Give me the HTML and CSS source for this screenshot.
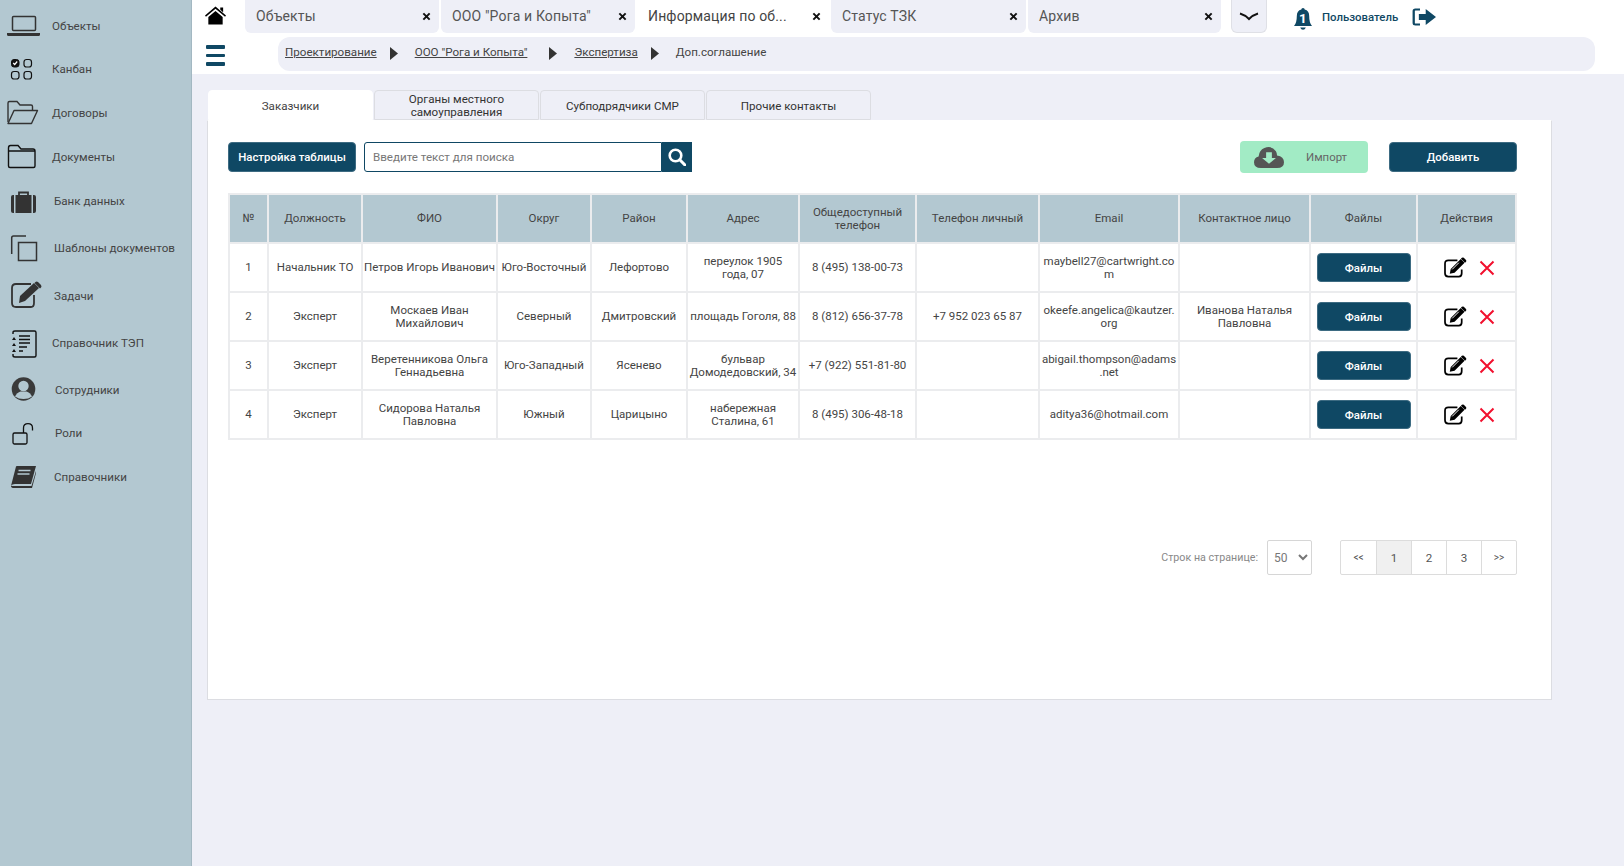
FILE: index.html
```html
<!DOCTYPE html>
<html lang="ru">
<head>
    <meta charset="UTF-8">
    <meta name="viewport" content="width=device-width, initial-scale=1.0">
    <title>Контакты</title>
    <link rel="stylesheet" href="styles.css">
</head>
<body>
    <svg class="sprite" width="0" height="0">
        <symbol id="icon-edit" viewBox="0 0 24 22">
            <path d="M14 3.5H4.5Q1 3.5 1 7v10q0 3.5 3.5 3.5h11q3 0 3-3.5v-4" fill="none" stroke="#000" stroke-width="1.8"/>
            <path d="M7 12.5 17.5 2l4 4L11 16.5l-5 1z" fill="#000"/>
            <path d="M18.7 .8q1-.8 2 0l2.300 2.300q.8 1 0 2l-1 1-4.300-4.300z" fill="#000"/>
            <path d="M8.5 13l7-7" stroke="#fff" stroke-width="1"/>
        </symbol>
        <symbol id="icon-cross" viewBox="0 0 16 16">
            <path d="M1.5 1.5l13 13M14.5 1.5l-13 13" stroke="#f2102e" stroke-width="2"/>
        </symbol>
        <symbol id="icon-crumb" viewBox="0 0 8 13">
            <path d="M0 0l8 6.5L0 13z" fill="#333"/>
        </symbol>
        <symbol id="icon-close" viewBox="0 0 10 10">
            <path d="M1.5 1.5l7 7M8.5 1.5l-7 7" stroke="#111" stroke-width="2.2"/>
        </symbol>
    </svg>

    <!-- Боковое меню -->
    <nav class="sidebar">
        <a class="side-item first">
            <svg class="side-icon" viewBox="0 0 40 30"><rect x="7.5" y="6.5" width="23" height="14" rx="1" fill="none" stroke="#333" stroke-width="1.5"/><path d="M2 23h33v1.5q0 1.500-1.500 1.500h-30q-1.500 0-1.500-1.500z" fill="#333"/></svg>
            <span class="side-label">Объекты</span>
        </a>
        <a class="side-item">
            <svg class="side-icon" viewBox="0 0 40 30"><rect x="6.5" y="6.5" width="7.5" height="7.5" rx="2.5" fill="#111" stroke="#111"/><path d="M8.2 10l1.500 1.500 2.500-3" fill="none" stroke="#fff" stroke-width="1.2"/><rect x="19" y="6.5" width="7.5" height="7.5" rx="2.5" fill="none" stroke="#111" stroke-width="1.2"/><rect x="6.5" y="18.5" width="7.5" height="7.5" rx="2.5" fill="none" stroke="#111" stroke-width="1.2"/><rect x="19" y="18.5" width="7.5" height="7.5" rx="2.5" fill="none" stroke="#111" stroke-width="1.2"/></svg>
            <span class="side-label">Канбан</span>
        </a>
        <a class="side-item">
            <svg class="side-icon" viewBox="0 0 40 30"><path d="M3 25V6q0-1.500 1.500-1.500H12l3 3.500h11q1.500 0 1.500 1.500V13" fill="none" stroke="#333" stroke-width="1.4"/><path d="M3 26.5l6-13h23.5l-6 13z" fill="none" stroke="#333" stroke-width="1.4" stroke-linejoin="round"/></svg>
            <span class="side-label">Договоры</span>
        </a>
        <a class="side-item">
            <svg class="side-icon" viewBox="0 0 40 30"><path d="M3.5 25V7q0-2.500 2-2.500H13l3 3.500h12q2 0 2 2V25q0 1.500-1.500 1.500H5q-1.500 0-1.500-1.500zM3.500 10H30" fill="none" stroke="#111" stroke-width="1.4"/></svg>
            <span class="side-label">Документы</span>
        </a>
        <a class="side-item wide">
            <svg class="side-icon" viewBox="0 0 40 30"><path d="M14 11V7.500h9V11" fill="none" stroke="#333" stroke-width="1.8"/><rect x="10.5" y="10" width="16" height="18" fill="#333"/><path d="M9 10v18H8q-2 0-2-2V12q0-2 2-2zM28 10v18h1q2 0 2-2V12q0-2-2-2z" fill="#333"/></svg>
            <span class="side-label shift">Банк данных</span>
        </a>
        <a class="side-item wide">
            <svg class="side-icon" viewBox="0 0 40 30"><path d="M21 3H8.500Q6.700 3 6.700 5v16" fill="none" stroke="#333" stroke-width="1.5"/><rect x="13.5" y="9.5" width="18" height="18" fill="none" stroke="#333" stroke-width="1.5"/></svg>
            <span class="side-label shift">Шаблоны документов</span>
        </a>
        <a class="side-item wide">
            <svg class="side-icon" viewBox="0 0 40 30"><path d="M26 4H11q-4 0-4 4v15q0 4 4 4h15q3 0 3-4v-8" fill="none" stroke="#333" stroke-width="1.8"/><path d="M15 16 29 3l5 5-14 13-6 2z" fill="#333"/><path d="M30.500 2q1-1 2.500 0l3 3q1 1.500 0 2.500L35 8.500 29.500 3z" fill="#333"/></svg>
            <span class="side-label shift">Задачи</span>
        </a>
        <a class="side-item wide tep">
            <svg class="side-icon" viewBox="0 0 40 30"><path d="M8 6V4.500Q8 3 10 3h19.500q1.500 0 1.500 1.500v23q0 1.500-1.500 1.500H10q-2 0-2-1.500V26" fill="none" stroke="#111" stroke-width="1.4"/><path d="M14 8h11M14 11.500h11M14 15h11M14 19h8M14 23h4" stroke="#111" stroke-width="1.5"/><path d="M9 9l2 3H7zM9 15l2 3H7zM9 21l2 3H7z" fill="#111"/></svg>
            <span class="side-label">Справочник ТЭП</span>
        </a>
        <a class="side-item first">
            <svg class="side-icon" viewBox="0 0 40 30"><circle cx="18.5" cy="15" r="11.8" fill="#3a3a3a"/><circle cx="18.5" cy="12" r="5.2" fill="#b3c8d1"/><path d="M10 22.500q2-4 5.500-5h6q3.500 1 5.500 5-3.500 2.500-8.500 2.500T10 22.500z" fill="#b3c8d1"/></svg>
            <span class="side-label shift-more">Сотрудники</span>
        </a>
        <a class="side-item">
            <svg class="side-icon" viewBox="0 0 40 30"><rect x="8" y="16" width="14" height="11" rx="1.5" fill="none" stroke="#111" stroke-width="1.3"/><path d="M18.500 16v-5q0-4.300 4.500-4.300t4.500 4.300v2.500" fill="none" stroke="#111" stroke-width="1.3"/></svg>
            <span class="side-label shift-more">Роли</span>
        </a>
        <a class="side-item">
            <svg class="side-icon" viewBox="0 0 40 30"><path d="M11 5.500Q11 5 12 5h19l-5 18H10q-3 0-4 2 .5-2 1-4z" fill="#333"/><path d="M6 25q0 2 3 2h18l4-15v-2l-4.500 15H10q-3 0-4 0z" fill="#333"/><path d="M13.500 9.500h12M12.500 13h12" stroke="#b3c8d1" stroke-width="1.3"/></svg>
            <span class="side-label shift">Справочники</span>
        </a>
    </nav>

    <div class="main">
        <header class="topbar">
            <div class="tabs-row">
                <svg class="home" viewBox="0 0 22 19"><path d="M11 0 22 9.500l-1 1.200L11 2.300 1 10.700 0 9.500z" fill="#000"/><path d="M16 1h3v5l-3-2.500zM3.500 11 11 4.700l7.500 6.300v8H3.500z" fill="#000"/></svg>
                <div class="tab"><span class="tab-name">Объекты</span><svg class="tab-close"><use href="#icon-close"/></svg></div>
                <div class="tab"><span class="tab-name">ООО "Рога и Копыта"</span><svg class="tab-close"><use href="#icon-close"/></svg></div>
                <div class="tab tab-active"><span class="tab-name">Информация по об...</span><svg class="tab-close"><use href="#icon-close"/></svg></div>
                <div class="tab tab-status"><span class="tab-name">Статус ТЗК</span><svg class="tab-close"><use href="#icon-close"/></svg></div>
                <div class="tab tab-last"><span class="tab-name">Архив</span><svg class="tab-close"><use href="#icon-close"/></svg></div>
                <div class="tab-more"><svg width="20" height="9" viewBox="0 0 20 9"><path d="M1 1.500Q6 3 10 7 14 3 19 1.500" fill="none" stroke="#111" stroke-width="2"/></svg></div>
                <div class="user">
                    <svg class="bell" viewBox="0 0 16 23" preserveAspectRatio="none"><path d="M6.500 2.500a1.500 1.500 0 0 1 3 0q4 1 4 6.500 0 7 2.500 10H0q2.500-3 2.500-10 0-5.500 4-6.500z" fill="#0f4864"/><path d="M5.500 20.500h5q-.8 2.200-2.500 2.200t-2.500-2.200z" fill="#0f4864"/><text x="8" y="16" class="bell-count">1</text></svg>
                    <span class="user-name">Пользователь</span>
                    <svg class="logout" viewBox="0 0 21 18" preserveAspectRatio="none"><path d="M7 1.500H3Q1.500 1.500 1.500 3v12q0 1.500 1.500 1.500h4" fill="none" stroke="#0f4864" stroke-width="2"/><path d="M6 6h6V1l9 8-9 8v-5H6z" fill="#0f4864"/></svg>
                </div>
            </div>
            <div class="crumbs-row">
                <div class="burger"><span></span><span></span><span></span></div>
                <div class="crumbs">
                    <a class="crumb">Проектирование</a>
                    <svg class="crumb-arrow"><use href="#icon-crumb"/></svg>
                    <a class="crumb">ООО "Рога и Копыта"</a>
                    <svg class="crumb-arrow far"><use href="#icon-crumb"/></svg>
                    <a class="crumb">Экспертиза</a>
                    <svg class="crumb-arrow"><use href="#icon-crumb"/></svg>
                    <span class="crumb-last">Доп.соглашение</span>
                </div>
            </div>
        </header>

        <div class="content">
            <div class="page-tabs">
                <div class="page-tab page-tab-active">Заказчики</div>
                <div class="page-tab">Органы местного самоуправления</div>
                <div class="page-tab">Субподрядчики СМР</div>
                <div class="page-tab">Прочие контакты</div>
            </div>
            <div class="card">
                <div class="toolbar">
                    <button class="btn btn-settings">Настройка таблицы</button>
                    <div class="search">
                        <input type="text" class="search-input" placeholder="Введите текст для поиска">
                        <button class="search-btn">
                            <svg width="18" height="18" viewBox="0 0 18 18"><circle cx="7.5" cy="7.5" r="5.8" fill="none" stroke="#fff" stroke-width="2.6"/><path d="M11.800 11.800 17 17" stroke="#fff" stroke-width="3" stroke-linecap="round"/></svg>
                        </button>
                    </div>
                    <button class="btn-import">
                        <svg width="30" height="22" viewBox="0 0 26 21" preserveAspectRatio="none"><path d="M6 21q-6 0-6-5.500Q0 11 4 10 4.500 4 9 2q6-3 10 3 1 2 1 4 6 1 6 6.500T20 21z" fill="#555"/><path d="M10.500 6h5v5.500h3.500L13 17l-6-5.500h3.500z" fill="#a2ebc5"/></svg>
                        <span>Импорт</span>
                    </button>
                    <button class="btn btn-add">Добавить</button>
                </div>

                <table class="data-table">
                    <colgroup>
                        <col class="c-num"><col class="c-post"><col class="c-fio"><col class="c-okrug"><col class="c-rayon"><col class="c-addr">
                        <col class="c-phone"><col class="c-own"><col class="c-mail"><col class="c-person"><col class="c-files"><col class="c-act">
                    </colgroup>
                    <thead>
                        <tr>
                            <th>№</th><th>Должность</th><th>ФИО</th><th>Округ</th><th>Район</th><th>Адрес</th>
                            <th>Общедоступный телефон</th><th>Телефон личный</th><th>Email</th><th>Контактное лицо</th><th>Файлы</th><th>Действия</th>
                        </tr>
                    </thead>
                    <tbody>
                        <tr>
                            <td>1</td><td>Начальник ТО</td><td>Петров Игорь Иванович</td><td>Юго-Восточный</td><td>Лефортово</td><td>переулок 1905 года,&nbsp;07</td>
                            <td>8 (495) 138-00-73</td><td></td><td>maybell27@cartwright.com</td><td></td>
                            <td><button class="btn btn-files">Файлы</button></td>
                            <td><div class="actions"><svg class="act-edit"><use href="#icon-edit"/></svg><svg class="act-del"><use href="#icon-cross"/></svg></div></td>
                        </tr>
                        <tr>
                            <td>2</td><td>Эксперт</td><td>Москаев Иван Михайлович</td><td>Северный</td><td>Дмитровский</td><td>площадь Гоголя, 88</td>
                            <td>8 (812) 656-37-78</td><td>+7 952 023 65 87</td><td>okeefe.angelica@kautzer.org</td><td>Иванова Наталья Павловна</td>
                            <td><button class="btn btn-files">Файлы</button></td>
                            <td><div class="actions"><svg class="act-edit"><use href="#icon-edit"/></svg><svg class="act-del"><use href="#icon-cross"/></svg></div></td>
                        </tr>
                        <tr>
                            <td>3</td><td>Эксперт</td><td>Веретенникова Ольга Геннадьевна</td><td>Юго-Западный</td><td>Ясенево</td><td>бульвар Домодедовский, 34</td>
                            <td>+7 (922) 551-81-80</td><td></td><td>abigail.thompson@adams.net</td><td></td>
                            <td><button class="btn btn-files">Файлы</button></td>
                            <td><div class="actions"><svg class="act-edit"><use href="#icon-edit"/></svg><svg class="act-del"><use href="#icon-cross"/></svg></div></td>
                        </tr>
                        <tr>
                            <td>4</td><td>Эксперт</td><td>Сидорова Наталья Павловна</td><td>Южный</td><td>Царицыно</td><td>набережная Сталина, 61</td>
                            <td>8 (495) 306-48-18</td><td></td><td>aditya36@hotmail.com</td><td></td>
                            <td><button class="btn btn-files">Файлы</button></td>
                            <td><div class="actions"><svg class="act-edit"><use href="#icon-edit"/></svg><svg class="act-del"><use href="#icon-cross"/></svg></div></td>
                        </tr>
                    </tbody>
                </table>

                <div class="pager-row">
                    <span class="pager-label">Строк на странице:</span>
                    <select class="pager-select"><option>50</option></select>
                    <div class="pager">
                        <a class="page small">&lt;&lt;</a>
                        <a class="page current">1</a>
                        <a class="page">2</a>
                        <a class="page">3</a>
                        <a class="page small">&gt;&gt;</a>
                    </div>
                </div>
            </div>
        </div>
    </div>
</body>
</html>
```

FILE: styles.css
```css
/* Общие стили */
* {
    box-sizing: border-box;
}
html, body {
    height: 100%;
}
body {
    margin: 0;
    display: flex;
    overflow: hidden;
    background-color: #eeeff7;
    color: #444;
    font-family: Roboto, "Liberation Sans", sans-serif;
    font-size: 11.6px;
}
.sprite {
    position: absolute;
}

/* Боковое меню */
.sidebar {
    width: 192px;
    flex-shrink: 0;
    padding: 10px 0 0 5px;
    background-color: #b3c8d1;
    border-right: 1px solid #a3b8c2;
}
.side-item {
    display: flex;
    align-items: center;
    height: 30px;
    margin-bottom: 14px;
}
.side-item.first {
    margin-bottom: 13px;
}
.side-item.wide {
    margin-bottom: 17.5px;
}
.side-item.tep {
    margin-bottom: 16.5px;
}
.side-icon {
    width: 40px;
    height: 30px;
    flex-shrink: 0;
    margin-right: 7px;
}
.side-label {
    padding-top: 1px;
    color: #444;
    white-space: nowrap;
}
.side-label.shift {
    margin-left: 2px;
}
.side-label.shift-more {
    margin-left: 3px;
}

/* Шапка */
.main {
    flex: 1;
    min-width: 0;
}
.topbar {
    height: 74px;
    background-color: #fff;
}
.tabs-row {
    display: flex;
    align-items: flex-start;
    gap: 2px;
    height: 37px;
    padding-left: 13px;
}
.home {
    width: 21px;
    height: 19px;
    margin: 6px 17px 0 0;
}
.tab {
    display: flex;
    align-items: center;
    justify-content: space-between;
    width: 194px;
    height: 33px;
    padding: 0 8px 1px 11px;
    background-color: #eeeff7;
    border-radius: 0 0 6px 6px;
}
.tab-active {
    width: 192px;
    background-color: #fff;
}
.tab-status {
    width: 195px;
}
.tab-last {
    width: 193px;
}
.tab-name {
    font-size: 14px;
    letter-spacing: .15px;
    color: #555;
    white-space: nowrap;
}
.tab-active .tab-name {
    color: #444;
}
.tab-close {
    width: 9px;
    height: 9px;
}
.tab-more {
    display: flex;
    align-items: center;
    justify-content: center;
    width: 36px;
    height: 33px;
    margin-left: 8px;
    background-color: #eeeff7;
    border: 1px solid #dfe0e6;
    border-top: none;
    border-radius: 0 0 6px 6px;
}
.user {
    display: flex;
    align-items: center;
    margin-left: 25px;
    height: 33px;
}
.bell {
    width: 18px;
    height: 23px;
    margin-top: 4px;
}
.bell-count {
    fill: #fff;
    font-family: Roboto, sans-serif;
    font-size: 12px;
    font-weight: bold;
    text-anchor: middle;
}
.user-name {
    margin: 0 14px 0 10px;
    font-size: 11.4px;
    font-weight: 500;
    color: #0f4864;
}
.logout {
    width: 24px;
    height: 18px;
}
.crumbs-row {
    display: flex;
    align-items: flex-start;
    padding-left: 14px;
}
.burger {
    display: flex;
    flex-direction: column;
    gap: 5px;
    width: 19px;
    margin: 8px 53px 0 0;
}
.burger span {
    height: 3.5px;
    background-color: #0f4864;
    border-radius: 1px;
}
.crumbs {
    display: flex;
    align-items: flex-start;
    width: 1317px;
    height: 34px;
    padding: 8px 0 0 7px;
    background-color: #eeeff7;
    border-radius: 12px;
}
.crumb {
    color: #444;
    text-decoration: underline;
}
.crumb-last {
    color: #444;
}
.crumb-arrow {
    width: 8px;
    height: 13px;
    margin: 2px 17px 0 13px;
}
.crumb-arrow.far {
    margin-left: 22px;
}

/* Контент */
.content {
    padding: 17px 0 0 15px;
}
.page-tabs {
    display: flex;
    gap: 1px;
    height: 29px;
    margin-left: 1px;
    align-items: flex-end;
}
.page-tab {
    display: flex;
    align-items: center;
    justify-content: center;
    width: 165px;
    height: 30px;
    padding: 2px 15px 0;
    line-height: 13px;
    text-align: center;
    color: #333;
    background-color: #eeeff7;
    border: 1px solid #dcdde2;
    border-radius: 4px 4px 0 0;
}
.page-tab-active {
    background-color: #fff;
    border-color: #fff;
    color: #444;
}
.card {
    width: 1345px;
    height: 580px;
    padding: 20px 34px 0 20px;
    background-color: #fff;
    border: 1px solid #dcdde2;
    border-top-color: #fff;
}
.toolbar {
    display: flex;
    align-items: center;
    height: 32px;
}
.btn {
    height: 30px;
    border: 1px solid #3d6b82;
    border-radius: 4px;
    background-color: #0f4864;
    color: #fff;
    font-family: inherit;
    font-size: 11.4px;
    font-weight: 500;
}
.btn-settings {
    width: 128px;
    padding: 0;
}
.search {
    display: flex;
    margin-left: 8px;
    height: 30px;
}
.search-input {
    width: 298px;
    padding: 0 8px;
    border: 1px solid #0f4864;
    border-radius: 3px 0 0 3px;
    outline: none;
    font-family: inherit;
    font-size: 11.6px;
}
.search-input::placeholder {
    color: #777;
}
.search-btn {
    display: flex;
    align-items: center;
    justify-content: center;
    width: 30px;
    padding: 0;
    border: none;
    background-color: #0f4864;
}
.btn-import {
    display: flex;
    align-items: center;
    width: 128px;
    height: 32px;
    margin-left: auto;
    padding: 0 0 0 14px;
    border: none;
    border-radius: 4px;
    background-color: #a2ebc5;
    color: #666;
    font-family: inherit;
    font-size: 11.4px;
}
.btn-import span {
    margin-left: 22px;
}
.btn-add {
    width: 128px;
    margin-left: 21px;
}

/* Таблица */
.data-table {
    table-layout: fixed;
    width: 1287px;
    margin-top: 20px;
    border-collapse: collapse;
    font-size: 11.5px;
}
.c-num { width: 39px; }
.c-post { width: 94px; }
.c-fio { width: 135px; }
.c-okrug { width: 94px; }
.c-rayon { width: 96px; }
.c-addr { width: 112px; }
.c-phone { width: 117px; }
.c-own { width: 123px; }
.c-mail { width: 140px; }
.c-person { width: 131px; }
.c-files { width: 107px; }
.c-act { width: 99px; }
.data-table th,
.data-table td {
    padding: 0 1px;
    border: 2px solid #ebecee;
    text-align: center;
    line-height: 13px;
    word-break: break-word;
}
.data-table th {
    height: 49px;
    font-weight: 400;
    background-color: #b3c8d1;
    color: #444;
}
.data-table td {
    height: 49px;
    background-color: #fff;
    color: #444;
}
.btn-files {
    display: block;
    width: 94px;
    height: 29px;
    margin: 0 auto;
    padding: 0;
}
.actions {
    display: flex;
    align-items: center;
    justify-content: center;
    gap: 12px;
    padding-left: 6px;
}
.act-edit {
    width: 23px;
    height: 21px;
}
.act-del {
    width: 16px;
    height: 16px;
}

/* Пагинация */
.pager-row {
    display: flex;
    align-items: center;
    justify-content: flex-end;
    margin-top: 100px;
}
.pager-label {
    font-size: 10.7px;
    color: #888;
}
.pager-select {
    width: 45px;
    height: 35px;
    margin-left: 9px;
    padding: 0 0 0 2px;
    border: 1px solid #d6d6d6;
    border-radius: 2px;
    background-color: #fff;
    color: #777;
    font-family: inherit;
    font-size: 12px;
}
.pager {
    display: flex;
    margin-left: 28px;
    border: 1px solid #dcdcdc;
    border-radius: 2px;
}
.page {
    display: flex;
    align-items: center;
    justify-content: center;
    width: 35px;
    height: 33px;
    border-left: 1px solid #dcdcdc;
    color: #555;
}
.page:first-child {
    border-left: none;
}
.page.small {
    font-size: 10px;
}
.page.current {
    background-color: #f0f0f0;
}
```
